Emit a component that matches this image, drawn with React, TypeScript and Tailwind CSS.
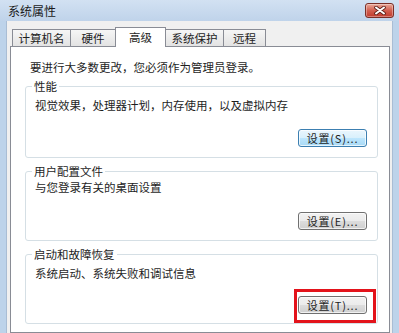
import React from 'react';

const FONT = '"Noto Sans CJK SC", "Noto Sans", sans-serif';

type Group = {
  title: string;
  desc: string;
  btn: string;
  textMt: string;
  btnMt: string;
  pb: string;
  focused?: boolean;
  marked?: boolean;
};

const groups: Group[] = [
  {
    title: '性能',
    desc: '视觉效果，处理器计划，内存使用，以及虚拟内存',
    btn: '设置(S)...',
    textMt: 'mt-[4px]',
    btnMt: 'mt-[16px]',
    pb: 'pb-[10px]',
    focused: true,
  },
  {
    title: '用户配置文件',
    desc: '与您登录有关的桌面设置',
    btn: '设置(E)...',
    textMt: 'mt-[1px]',
    btnMt: 'mt-[17px]',
    pb: 'pb-[10px]',
  },
  {
    title: '启动和故障恢复',
    desc: '系统启动、系统失败和调试信息',
    btn: '设置(T)...',
    textMt: 'mt-[4px]',
    btnMt: 'mt-[15px]',
    pb: 'pb-[9px]',
    marked: true,
  },
];

const tabs = [
  { label: '计算机名', w: 'w-[59px]' },
  { label: '硬件', w: 'w-[46px]' },
  { label: '高级', w: 'w-[51px]', active: true },
  { label: '系统保护', w: 'w-[59px]' },
  { label: '远程', w: 'w-[43px]' },
];

function CloseButton() {
  return (
    <div className="flex h-[15px] w-[29px] items-center justify-center rounded-[3px] border border-[#7a2f27] bg-gradient-to-b from-[#e8a899] via-[#d25f50] to-[#c0392b] shadow-[inset_0_0_0_1px_rgba(255,255,255,0.35)]">
      <svg width="12" height="9" viewBox="0 0 12 9">
        <path d="M2 1.5 L10 7.5 M10 1.5 L2 7.5" stroke="#5a1d17" strokeWidth="3.6" strokeLinecap="round" />
        <path d="M2 1.5 L10 7.5 M10 1.5 L2 7.5" stroke="#ffffff" strokeWidth="2" strokeLinecap="round" />
      </svg>
    </div>
  );
}

function SettingsButton({ label, focused }: { label: string; focused?: boolean }) {
  return (
    <button
      type="button"
      className={
        focused
          ? 'flex h-[18px] w-[69px] items-center justify-center rounded-[3px] border border-[#3c7fb1] bg-[linear-gradient(to_bottom,#eaf6fd_0%,#d9f0fc_50%,#bee6fd_50%,#a7d9f5_100%)] text-[11px] leading-none tracking-[0.8px] text-[#1e1e1e] shadow-[inset_0_0_0_1px_rgba(255,255,255,0.7)]'
          : 'flex h-[18px] w-[69px] items-center justify-center rounded-[3px] border border-[#707070] bg-[linear-gradient(to_bottom,#f2f2f2_0%,#ebebeb_50%,#dddddd_50%,#cfcfcf_100%)] text-[11px] leading-none tracking-[0.8px] text-[#1e1e1e] shadow-[inset_0_0_0_1px_rgba(255,255,255,0.7)]'
      }
    >
      {label}
    </button>
  );
}

export default function App() {
  return (
    <div
      className="flex h-[333px] w-[399px] flex-col overflow-hidden bg-[#bdd3ea] text-[#1e1e1e]"
      style={{ fontFamily: FONT }}
    >
      {/* title bar */}
      <div className="flex h-[21px] shrink-0 items-start justify-between bg-gradient-to-b from-[#d2e1f2] to-[#bfd3ea] pl-[8px] pr-[5px] pt-[3px]">
        <span className="text-[12px] leading-[15px] text-[#1a1a1a]">系统属性</span>
        <CloseButton />
      </div>

      {/* frame + body */}
      <div className="flex min-h-0 flex-1 px-[6px]">
        <div className="flex min-w-0 flex-1 flex-col border-x border-[#a9bdd4] bg-[#f0f0f0] pl-[3px] pr-[2px] pt-[6px]">
          {/* tabs */}
          <div className="ml-[2px] flex h-[19px] items-end">
            {tabs.map((t, i) =>
              t.active ? (
                <div
                  key={t.label}
                  className={`relative z-10 -mb-px flex h-[20px] ${t.w} ${i > 0 ? '-ml-px' : ''} items-start justify-center border-x border-t border-[#898c95] bg-white pt-[2px] text-[11.5px] leading-[15px]`}
                >
                  {t.label}
                </div>
              ) : (
                <div
                  key={t.label}
                  className={`flex h-[17px] ${t.w} ${i > 0 ? '-ml-px' : ''} items-center justify-center border-x border-t border-[#898c95] bg-gradient-to-b from-[#f6f6f6] to-[#e3e3e3] text-[11.5px] leading-[15px]`}
                >
                  {t.label}
                </div>
              ),
            )}
          </div>

          {/* panel */}
          <div className="flex min-h-0 flex-1 flex-col border border-[#898c95] bg-white pl-[14px] pr-[11px] pt-[13px]">
            <p className="pl-[5px] text-[11.5px] leading-[15px]">要进行大多数更改，您必须作为管理员登录。</p>

            {groups.map((g, i) => (
              <fieldset
                key={g.title}
                className={`${i === 0 ? 'mt-[4px]' : 'mt-[6px]'} rounded-[3px] border border-[#d5dfe5] pl-[9px] pr-[10px] ${g.pb}`}
              >
                <legend className="ml-[-3px] px-[2px] text-[11.5px] leading-[15px]">{g.title}</legend>
                <p className={`${g.textMt} text-[11.5px] leading-[15px]`}>{g.desc}</p>
                <div className={`${g.btnMt} flex justify-end`}>
                  <div className="relative">
                    <SettingsButton label={g.btn} focused={g.focused} />
                    {g.marked ? (
                      <div className="pointer-events-none absolute -bottom-[9px] -left-[4px] -right-[9px] -top-[7px] border-[3px] border-[#e3131b]" />
                    ) : null}
                  </div>
                </div>
              </fieldset>
            ))}
          </div>
        </div>
      </div>
    </div>
  );
}
